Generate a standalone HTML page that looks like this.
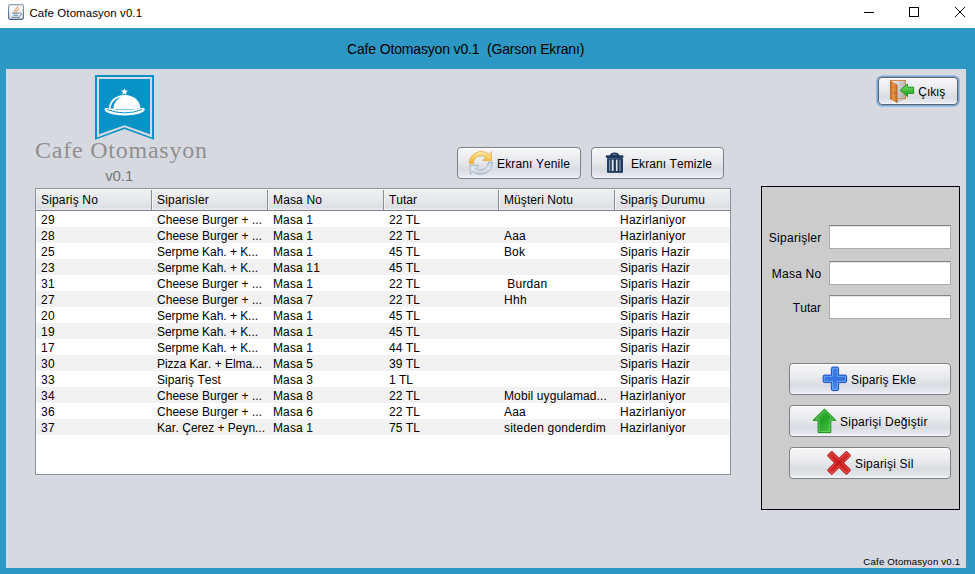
<!DOCTYPE html>
<html><head><meta charset="utf-8">
<style>
*{box-sizing:border-box;margin:0;padding:0}
html,body{width:975px;height:574px;overflow:hidden;background:#fff;font-family:"Liberation Sans",sans-serif;color:#000;font-kerning:none}
.abs{position:absolute}
.t{position:absolute;white-space:nowrap}
#titlebar{left:0;top:0;width:975px;height:28px;background:#fff}
#blue{left:0;top:28px;width:975px;height:546px;background:#2c98c3}
#panel{left:6px;top:69px;width:960px;height:499px;background:#d6d9e0}
.btn{position:absolute;border:1px solid #7d8187;border-radius:4px;background:linear-gradient(#f7f7f9 0%,#eaebee 40%,#d9dce1 72%,#e4e6ec 90%,#eff1f7 100%);box-shadow:inset 0 1px 0 #fff,inset 0 -1px 0 #f4f6fb}
#table{left:35px;top:188px;width:696px;height:287px;border:1px solid #8d9199;background:#fff;overflow:hidden}
.hdr{position:absolute;left:0;top:0;width:694px;height:22px;background:linear-gradient(#f0f1f3,#e4e6e9 60%,#dcdfe3 88%,#e8eaed 96%);border-bottom:1px solid #80848b;box-shadow:inset 0 1px 0 #fbfbfc}
.sep{position:absolute;top:1px;width:2px;height:20px;border-left:1px solid #8a8e95;border-right:1px solid #f3f4f6}
.rowg{position:absolute;left:0;width:694px;height:16px;background:#f2f2f2}
#rpanel{left:761px;top:186px;width:199px;height:324px;background:#cccccc;border:1px solid #000}
.tf{position:absolute;left:829px;width:122px;height:24px;background:#fff;border:1px solid #ababab;border-top-color:#848484;box-shadow:inset 0 1px 0 #e6e6e6}
</style></head><body>
<div id="titlebar" class="abs"></div>
<svg class="abs" style="left:8px;top:4px" width="16" height="16" viewBox="0 0 16 16">
<defs><linearGradient id="gj" x1="0" y1="0" x2="0" y2="1"><stop offset="0" stop-color="#ffffff"/><stop offset="1" stop-color="#e4e6e8"/></linearGradient>
<linearGradient id="gjb" x1="0" y1="0" x2="0" y2="1"><stop offset="0" stop-color="#8aa0b5"/><stop offset="1" stop-color="#3f5d7c"/></linearGradient></defs>
<rect x="0.6" y="0.6" width="14.8" height="14.8" rx="1.6" fill="url(#gj)" stroke="url(#gjb)" stroke-width="1.1"/>
<path d="M6.6,8.3C5.6,7 7.2,5.9 8.2,4.6C8.9,3.7 9.5,3.2 9.6,2.6M8.1,8.2C7.6,7.2 8.6,6.5 9.6,5.8C10.2,5.4 10.5,5.2 10.5,4.9" fill="none" stroke="#e8751c" stroke-width="0.95" stroke-linecap="round"/>
<path d="M4.2,9.2H11M5.4,11.3H9.8M3.2,13.3H12M11.4,8.5L13.8,10.2L11.4,12" fill="none" stroke="#5b7c9b" stroke-width="0.95"/>
</svg>
<div class="t" style="left:29.5px;top:7px;font-size:11.4px;line-height:12px;letter-spacing:0.129px;font-family:'Liberation Sans',sans-serif;">Cafe Otomasyon v0.1</div>
<svg class="abs" style="left:855px;top:0" width="120" height="28" viewBox="0 0 120 28">
<path d="M9,12.5H19" stroke="#000" stroke-width="1"/>
<rect x="54.5" y="7.5" width="9" height="9" fill="none" stroke="#000" stroke-width="1"/>
<path d="M100,7L110,17M110,7L100,17" stroke="#000" stroke-width="1"/>
</svg>
<div id="blue" class="abs"></div>
<div class="t" style="left:347px;top:41px;font-size:14px;line-height:16px;letter-spacing:-0.155px;font-family:'Liberation Sans',sans-serif;">Cafe Otomasyon v0.1&nbsp; (Garson Ekranı)</div>
<div id="panel" class="abs"></div>
<svg class="abs" style="left:95px;top:75px" width="59" height="65" viewBox="0 0 59 65">
<path d="M0,0H59V64.7L29.5,54L0,64.7Z" fill="#0892c6"/>
<path d="M2,2H57V62.4L29.5,52.2L2,62.4Z" fill="#d6d9e0"/>
<path d="M4,4H55V59.2L29.5,50.2L4,59.2Z" fill="#0892c6"/>
<path d="M29.4,13.3l1.05,2.2l2.45,0.25l-1.8,1.6l0.5,2.4l-2.2,-1.25l-2.2,1.25l0.5,-2.4l-1.8,-1.6l2.45,-0.25z" fill="#fff"/>
<path d="M13.9,33.8C13.9,25.6 20.8,20 29.6,20C38.4,20 45.4,25.6 45.4,33.8Q29.6,34.6 13.9,33.8Z" fill="#fff"/>
<path d="M26.8,21.9C21,22.6 16.3,27 15.4,33.4L18.6,33.6C18.4,29 20.6,24.6 26.8,21.9Z" fill="#0892c6"/>
<path d="M9.6,34.5C9.6,32.8 11.5,32.9 14,33.5Q29.6,36.2 45.3,33.5C47.8,32.9 49.7,32.8 49.7,34.5A20.05,6.1 0 0 1 9.6,34.5Z" fill="#fff"/>
<path d="M12.2,34.6Q29.6,41.1 47.1,34.6" fill="none" stroke="#0892c6" stroke-width="1"/>
</svg>
<div class="t" style="left:35px;top:137px;font-size:24px;line-height:26px;letter-spacing:0.774px;font-family:'Liberation Serif',serif;color:#918f8e;">Cafe Otomasyon</div>
<div class="t" style="left:105.2px;top:167px;font-size:15px;line-height:17px;letter-spacing:-0.088px;font-family:'Liberation Sans',sans-serif;color:#777777;">v0.1</div>
<div class="btn" style="left:878px;top:77px;width:80px;height:28px;border-color:#5f636a;box-shadow:0 0 0 1.6px #74a7da,inset 0 1px 0 #fff,inset 0 -1px 0 #f4f6fb"></div>
<svg class="abs" style="left:885px;top:76px" width="32" height="30" viewBox="0 0 32 30">
<defs><linearGradient id="gd" x1="0" y1="0" x2="1" y2="0.3"><stop offset="0" stop-color="#f6f6f6"/><stop offset="1" stop-color="#b4b4b4"/></linearGradient>
<linearGradient id="gw" x1="0" y1="0" x2="1" y2="0"><stop offset="0" stop-color="#c2641e"/><stop offset="0.5" stop-color="#e99445"/><stop offset="1" stop-color="#c46a22"/></linearGradient>
<linearGradient id="ga" x1="0" y1="0" x2="0" y2="1"><stop offset="0" stop-color="#8ee07a"/><stop offset="0.5" stop-color="#46bf3c"/><stop offset="1" stop-color="#229a22"/></linearGradient></defs>
<rect x="5.4" y="4.4" width="15.2" height="18.4" fill="url(#gd)" stroke="#d37a2c" stroke-width="0.9"/>
<path d="M12,23L20.6,23L12,27Z" fill="#c9c9c9"/>
<path d="M5,4.2L12.1,8.6V27L5,23Z" fill="url(#gw)"/>
<path d="M12.1,8.6V27" stroke="#a9561a" stroke-width="0.6"/>
<rect x="9" y="16.2" width="1" height="1.2" fill="#7a4a2a"/>
<rect x="4.9" y="8.2" width="0.8" height="1.2" fill="#8a9aa8"/>
<rect x="4.9" y="17.3" width="0.8" height="1.2" fill="#8a9aa8"/>
<path d="M15.3,14.2L22.5,8V11.2H28.6V17.4H22.5V20.6Z" fill="url(#ga)" stroke="#0f8f12" stroke-width="0.9" stroke-linejoin="miter"/>
</svg>
<div class="t" style="left:918.3px;top:85px;font-size:12px;line-height:14px;letter-spacing:-0.067px;font-family:'Liberation Sans',sans-serif;">Çıkış</div>
<div class="btn" style="left:457px;top:147px;width:124px;height:32px;"></div>
<svg class="abs" style="left:464px;top:148px" width="34" height="30" viewBox="0 0 34 30">
<defs><linearGradient id="go" x1="0" y1="0" x2="0" y2="1"><stop offset="0" stop-color="#fce7b0"/><stop offset="0.5" stop-color="#f8cc62"/><stop offset="1" stop-color="#eeaa2a"/></linearGradient>
<linearGradient id="gb" x1="0" y1="0" x2="0" y2="1"><stop offset="0" stop-color="#c5d1dd"/><stop offset="0.5" stop-color="#dfe6ee"/><stop offset="1" stop-color="#c3cfdb"/></linearGradient></defs>
<path d="M5.20,15.60A12.1,12.1 0 0 1 24.81,6.11L27.40,3.40L27.60,12.60L18.60,12.60L21.88,9.17A7.9,7.9 0 0 0 9.40,15.60Z" fill="url(#go)" stroke="#e0a63c" stroke-width="0.7" stroke-linejoin="round"/>
<path d="M28.40,14.20A12.1,12.1 0 0 1 8.79,23.69L6.20,26.40L6.00,17.20L15.00,17.20L11.72,20.63A7.9,7.9 0 0 0 24.20,14.20Z" fill="url(#gb)" stroke="#95a6b8" stroke-width="0.7" stroke-linejoin="round"/>
</svg>
<div class="t" style="left:497px;top:157px;font-size:12px;line-height:14px;letter-spacing:0.125px;font-family:'Liberation Sans',sans-serif;">Ekranı Yenile</div>
<div class="btn" style="left:591px;top:147px;width:133px;height:32px;"></div>
<svg class="abs" style="left:600px;top:148px" width="30" height="30" viewBox="0 0 30 30">
<path d="M9.9,8.2C9.9,5.6 12,4.6 14.6,4.6C17.2,4.6 19.3,5.6 19.3,8.2Z" fill="#1b375b"/>
<rect x="12.6" y="6.1" width="4.2" height="0.9" fill="#6f8097"/>
<rect x="5.8" y="7.2" width="17.7" height="2.8" rx="1.3" fill="#1b375b"/>
<rect x="7.0" y="10.3" width="16" height="14.4" rx="0.6" fill="#2a4466"/>
<rect x="7.7" y="10.6" width="14.6" height="13.8" fill="#1b375b"/>
<rect x="8.9" y="11.6" width="1.3" height="11.4" fill="#8796ab"/>
<rect x="11.8" y="11.6" width="1.8" height="11.4" fill="#e6eaf0"/>
<rect x="15.9" y="11.6" width="1.6" height="11.4" fill="#e6eaf0"/>
<rect x="19.3" y="11.6" width="1.3" height="11.4" fill="#8796ab"/>
</svg>
<div class="t" style="left:631px;top:157px;font-size:12px;line-height:14px;letter-spacing:0.070px;font-family:'Liberation Sans',sans-serif;">Ekranı Temizle</div>
<div id="table" class="abs">
<div class="hdr"></div>
<div class="sep" style="left:115px"></div>
<div class="sep" style="left:231px"></div>
<div class="sep" style="left:347px"></div>
<div class="sep" style="left:462px"></div>
<div class="sep" style="left:578px"></div>
<div class="t" style="left:5.0px;top:4px;font-size:12px;line-height:14px;letter-spacing:0.165px;font-family:'Liberation Sans',sans-serif;">Sipariş No</div>
<div class="t" style="left:121.0px;top:4px;font-size:12px;line-height:14px;letter-spacing:0.198px;font-family:'Liberation Sans',sans-serif;">Siparisler</div>
<div class="t" style="left:237.0px;top:4px;font-size:12px;line-height:14px;letter-spacing:0.140px;font-family:'Liberation Sans',sans-serif;">Masa No</div>
<div class="t" style="left:353.0px;top:4px;font-size:12px;line-height:14px;letter-spacing:-0.002px;font-family:'Liberation Sans',sans-serif;">Tutar</div>
<div class="t" style="left:468.0px;top:4px;font-size:12px;line-height:14px;letter-spacing:0.082px;font-family:'Liberation Sans',sans-serif;">Müşteri Notu</div>
<div class="t" style="left:584.0px;top:4px;font-size:12px;line-height:14px;letter-spacing:0.165px;font-family:'Liberation Sans',sans-serif;">Sipariş Durumu</div>
<div class="t" style="left:5.0px;top:24px;font-size:12px;line-height:14px;letter-spacing:0.326px;font-family:'Liberation Sans',sans-serif;">29</div>
<div class="t" style="left:121.0px;top:24px;font-size:12px;line-height:14px;letter-spacing:0.032px;font-family:'Liberation Sans',sans-serif;">Cheese Burger + ...</div>
<div class="t" style="left:237.0px;top:24px;font-size:12px;line-height:14px;letter-spacing:0.108px;font-family:'Liberation Sans',sans-serif;">Masa 1</div>
<div class="t" style="left:353.0px;top:24px;font-size:12px;line-height:14px;letter-spacing:0.063px;font-family:'Liberation Sans',sans-serif;">22 TL</div>
<div class="t" style="left:584.0px;top:24px;font-size:12px;line-height:14px;letter-spacing:0.221px;font-family:'Liberation Sans',sans-serif;">Hazirlaniyor</div>
<div class="rowg" style="top:38px"></div>
<div class="t" style="left:5.0px;top:40px;font-size:12px;line-height:14px;letter-spacing:0.326px;font-family:'Liberation Sans',sans-serif;">28</div>
<div class="t" style="left:121.0px;top:40px;font-size:12px;line-height:14px;letter-spacing:0.032px;font-family:'Liberation Sans',sans-serif;">Cheese Burger + ...</div>
<div class="t" style="left:237.0px;top:40px;font-size:12px;line-height:14px;letter-spacing:0.108px;font-family:'Liberation Sans',sans-serif;">Masa 1</div>
<div class="t" style="left:353.0px;top:40px;font-size:12px;line-height:14px;letter-spacing:0.063px;font-family:'Liberation Sans',sans-serif;">22 TL</div>
<div class="t" style="left:468.0px;top:40px;font-size:12px;line-height:14px;letter-spacing:0.216px;font-family:'Liberation Sans',sans-serif;">Aaa</div>
<div class="t" style="left:584.0px;top:40px;font-size:12px;line-height:14px;letter-spacing:0.221px;font-family:'Liberation Sans',sans-serif;">Hazirlaniyor</div>
<div class="t" style="left:5.0px;top:56px;font-size:12px;line-height:14px;letter-spacing:0.326px;font-family:'Liberation Sans',sans-serif;">25</div>
<div class="t" style="left:121.0px;top:56px;font-size:12px;line-height:14px;letter-spacing:-0.040px;font-family:'Liberation Sans',sans-serif;">Serpme Kah. + K...</div>
<div class="t" style="left:237.0px;top:56px;font-size:12px;line-height:14px;letter-spacing:0.108px;font-family:'Liberation Sans',sans-serif;">Masa 1</div>
<div class="t" style="left:353.0px;top:56px;font-size:12px;line-height:14px;letter-spacing:0.063px;font-family:'Liberation Sans',sans-serif;">45 TL</div>
<div class="t" style="left:468.0px;top:56px;font-size:12px;line-height:14px;letter-spacing:0.107px;font-family:'Liberation Sans',sans-serif;">Bok</div>
<div class="t" style="left:584.0px;top:56px;font-size:12px;line-height:14px;letter-spacing:0.153px;font-family:'Liberation Sans',sans-serif;">Siparis Hazir</div>
<div class="rowg" style="top:70px"></div>
<div class="t" style="left:5.0px;top:72px;font-size:12px;line-height:14px;letter-spacing:0.326px;font-family:'Liberation Sans',sans-serif;">23</div>
<div class="t" style="left:121.0px;top:72px;font-size:12px;line-height:14px;letter-spacing:-0.040px;font-family:'Liberation Sans',sans-serif;">Serpme Kah. + K...</div>
<div class="t" style="left:237.0px;top:72px;font-size:12px;line-height:14px;letter-spacing:0.139px;font-family:'Liberation Sans',sans-serif;">Masa 11</div>
<div class="t" style="left:353.0px;top:72px;font-size:12px;line-height:14px;letter-spacing:0.063px;font-family:'Liberation Sans',sans-serif;">45 TL</div>
<div class="t" style="left:584.0px;top:72px;font-size:12px;line-height:14px;letter-spacing:0.153px;font-family:'Liberation Sans',sans-serif;">Siparis Hazir</div>
<div class="t" style="left:5.0px;top:88px;font-size:12px;line-height:14px;letter-spacing:0.326px;font-family:'Liberation Sans',sans-serif;">31</div>
<div class="t" style="left:121.0px;top:88px;font-size:12px;line-height:14px;letter-spacing:0.032px;font-family:'Liberation Sans',sans-serif;">Cheese Burger + ...</div>
<div class="t" style="left:237.0px;top:88px;font-size:12px;line-height:14px;letter-spacing:0.108px;font-family:'Liberation Sans',sans-serif;">Masa 1</div>
<div class="t" style="left:353.0px;top:88px;font-size:12px;line-height:14px;letter-spacing:0.063px;font-family:'Liberation Sans',sans-serif;">22 TL</div>
<div class="t" style="left:471.3px;top:88px;font-size:12px;line-height:14px;letter-spacing:0.217px;font-family:'Liberation Sans',sans-serif;">Burdan</div>
<div class="t" style="left:584.0px;top:88px;font-size:12px;line-height:14px;letter-spacing:0.153px;font-family:'Liberation Sans',sans-serif;">Siparis Hazir</div>
<div class="rowg" style="top:102px"></div>
<div class="t" style="left:5.0px;top:104px;font-size:12px;line-height:14px;letter-spacing:0.326px;font-family:'Liberation Sans',sans-serif;">27</div>
<div class="t" style="left:121.0px;top:104px;font-size:12px;line-height:14px;letter-spacing:0.032px;font-family:'Liberation Sans',sans-serif;">Cheese Burger + ...</div>
<div class="t" style="left:237.0px;top:104px;font-size:12px;line-height:14px;letter-spacing:0.108px;font-family:'Liberation Sans',sans-serif;">Masa 7</div>
<div class="t" style="left:353.0px;top:104px;font-size:12px;line-height:14px;letter-spacing:0.063px;font-family:'Liberation Sans',sans-serif;">22 TL</div>
<div class="t" style="left:468.0px;top:104px;font-size:12px;line-height:14px;letter-spacing:0.329px;font-family:'Liberation Sans',sans-serif;">Hhh</div>
<div class="t" style="left:584.0px;top:104px;font-size:12px;line-height:14px;letter-spacing:0.153px;font-family:'Liberation Sans',sans-serif;">Siparis Hazir</div>
<div class="t" style="left:5.0px;top:120px;font-size:12px;line-height:14px;letter-spacing:0.326px;font-family:'Liberation Sans',sans-serif;">20</div>
<div class="t" style="left:121.0px;top:120px;font-size:12px;line-height:14px;letter-spacing:-0.040px;font-family:'Liberation Sans',sans-serif;">Serpme Kah. + K...</div>
<div class="t" style="left:237.0px;top:120px;font-size:12px;line-height:14px;letter-spacing:0.108px;font-family:'Liberation Sans',sans-serif;">Masa 1</div>
<div class="t" style="left:353.0px;top:120px;font-size:12px;line-height:14px;letter-spacing:0.063px;font-family:'Liberation Sans',sans-serif;">45 TL</div>
<div class="t" style="left:584.0px;top:120px;font-size:12px;line-height:14px;letter-spacing:0.153px;font-family:'Liberation Sans',sans-serif;">Siparis Hazir</div>
<div class="rowg" style="top:134px"></div>
<div class="t" style="left:5.0px;top:136px;font-size:12px;line-height:14px;letter-spacing:0.326px;font-family:'Liberation Sans',sans-serif;">19</div>
<div class="t" style="left:121.0px;top:136px;font-size:12px;line-height:14px;letter-spacing:-0.040px;font-family:'Liberation Sans',sans-serif;">Serpme Kah. + K...</div>
<div class="t" style="left:237.0px;top:136px;font-size:12px;line-height:14px;letter-spacing:0.108px;font-family:'Liberation Sans',sans-serif;">Masa 1</div>
<div class="t" style="left:353.0px;top:136px;font-size:12px;line-height:14px;letter-spacing:0.063px;font-family:'Liberation Sans',sans-serif;">45 TL</div>
<div class="t" style="left:584.0px;top:136px;font-size:12px;line-height:14px;letter-spacing:0.153px;font-family:'Liberation Sans',sans-serif;">Siparis Hazir</div>
<div class="t" style="left:5.0px;top:152px;font-size:12px;line-height:14px;letter-spacing:0.326px;font-family:'Liberation Sans',sans-serif;">17</div>
<div class="t" style="left:121.0px;top:152px;font-size:12px;line-height:14px;letter-spacing:-0.040px;font-family:'Liberation Sans',sans-serif;">Serpme Kah. + K...</div>
<div class="t" style="left:237.0px;top:152px;font-size:12px;line-height:14px;letter-spacing:0.108px;font-family:'Liberation Sans',sans-serif;">Masa 1</div>
<div class="t" style="left:353.0px;top:152px;font-size:12px;line-height:14px;letter-spacing:0.063px;font-family:'Liberation Sans',sans-serif;">44 TL</div>
<div class="t" style="left:584.0px;top:152px;font-size:12px;line-height:14px;letter-spacing:0.153px;font-family:'Liberation Sans',sans-serif;">Siparis Hazir</div>
<div class="rowg" style="top:166px"></div>
<div class="t" style="left:5.0px;top:168px;font-size:12px;line-height:14px;letter-spacing:0.326px;font-family:'Liberation Sans',sans-serif;">30</div>
<div class="t" style="left:121.0px;top:168px;font-size:12px;line-height:14px;letter-spacing:-0.035px;font-family:'Liberation Sans',sans-serif;">Pizza Kar. + Elma...</div>
<div class="t" style="left:237.0px;top:168px;font-size:12px;line-height:14px;letter-spacing:0.108px;font-family:'Liberation Sans',sans-serif;">Masa 5</div>
<div class="t" style="left:353.0px;top:168px;font-size:12px;line-height:14px;letter-spacing:0.063px;font-family:'Liberation Sans',sans-serif;">39 TL</div>
<div class="t" style="left:584.0px;top:168px;font-size:12px;line-height:14px;letter-spacing:0.153px;font-family:'Liberation Sans',sans-serif;">Siparis Hazir</div>
<div class="t" style="left:5.0px;top:184px;font-size:12px;line-height:14px;letter-spacing:0.326px;font-family:'Liberation Sans',sans-serif;">33</div>
<div class="t" style="left:121.0px;top:184px;font-size:12px;line-height:14px;letter-spacing:0.054px;font-family:'Liberation Sans',sans-serif;">Sipariş Test</div>
<div class="t" style="left:237.0px;top:184px;font-size:12px;line-height:14px;letter-spacing:0.108px;font-family:'Liberation Sans',sans-serif;">Masa 3</div>
<div class="t" style="left:353.0px;top:184px;font-size:12px;line-height:14px;letter-spacing:-0.003px;font-family:'Liberation Sans',sans-serif;">1 TL</div>
<div class="t" style="left:584.0px;top:184px;font-size:12px;line-height:14px;letter-spacing:0.153px;font-family:'Liberation Sans',sans-serif;">Siparis Hazir</div>
<div class="rowg" style="top:198px"></div>
<div class="t" style="left:5.0px;top:200px;font-size:12px;line-height:14px;letter-spacing:0.326px;font-family:'Liberation Sans',sans-serif;">34</div>
<div class="t" style="left:121.0px;top:200px;font-size:12px;line-height:14px;letter-spacing:0.032px;font-family:'Liberation Sans',sans-serif;">Cheese Burger + ...</div>
<div class="t" style="left:237.0px;top:200px;font-size:12px;line-height:14px;letter-spacing:0.108px;font-family:'Liberation Sans',sans-serif;">Masa 8</div>
<div class="t" style="left:353.0px;top:200px;font-size:12px;line-height:14px;letter-spacing:0.063px;font-family:'Liberation Sans',sans-serif;">22 TL</div>
<div class="t" style="left:468.0px;top:200px;font-size:12px;line-height:14px;letter-spacing:0.127px;font-family:'Liberation Sans',sans-serif;">Mobil uygulamad...</div>
<div class="t" style="left:584.0px;top:200px;font-size:12px;line-height:14px;letter-spacing:0.221px;font-family:'Liberation Sans',sans-serif;">Hazirlaniyor</div>
<div class="t" style="left:5.0px;top:216px;font-size:12px;line-height:14px;letter-spacing:0.326px;font-family:'Liberation Sans',sans-serif;">36</div>
<div class="t" style="left:121.0px;top:216px;font-size:12px;line-height:14px;letter-spacing:0.032px;font-family:'Liberation Sans',sans-serif;">Cheese Burger + ...</div>
<div class="t" style="left:237.0px;top:216px;font-size:12px;line-height:14px;letter-spacing:0.108px;font-family:'Liberation Sans',sans-serif;">Masa 6</div>
<div class="t" style="left:353.0px;top:216px;font-size:12px;line-height:14px;letter-spacing:0.063px;font-family:'Liberation Sans',sans-serif;">22 TL</div>
<div class="t" style="left:468.0px;top:216px;font-size:12px;line-height:14px;letter-spacing:0.216px;font-family:'Liberation Sans',sans-serif;">Aaa</div>
<div class="t" style="left:584.0px;top:216px;font-size:12px;line-height:14px;letter-spacing:0.221px;font-family:'Liberation Sans',sans-serif;">Hazirlaniyor</div>
<div class="rowg" style="top:230px"></div>
<div class="t" style="left:5.0px;top:232px;font-size:12px;line-height:14px;letter-spacing:0.326px;font-family:'Liberation Sans',sans-serif;">37</div>
<div class="t" style="left:121.0px;top:232px;font-size:12px;line-height:14px;letter-spacing:-0.019px;font-family:'Liberation Sans',sans-serif;">Kar. Çerez + Peyn...</div>
<div class="t" style="left:237.0px;top:232px;font-size:12px;line-height:14px;letter-spacing:0.108px;font-family:'Liberation Sans',sans-serif;">Masa 1</div>
<div class="t" style="left:353.0px;top:232px;font-size:12px;line-height:14px;letter-spacing:0.063px;font-family:'Liberation Sans',sans-serif;">75 TL</div>
<div class="t" style="left:468.0px;top:232px;font-size:12px;line-height:14px;letter-spacing:0.192px;font-family:'Liberation Sans',sans-serif;">siteden gonderdim</div>
<div class="t" style="left:584.0px;top:232px;font-size:12px;line-height:14px;letter-spacing:0.221px;font-family:'Liberation Sans',sans-serif;">Hazirlaniyor</div>
</div>
<div id="rpanel" class="abs"></div>
<div class="t" style="left:768.8px;top:231px;font-size:12px;line-height:14px;letter-spacing:0.278px;font-family:'Liberation Sans',sans-serif;">Siparişler</div>
<div class="tf" style="top:225px"></div>
<div class="t" style="left:771.8px;top:267px;font-size:12px;line-height:14px;letter-spacing:0.220px;font-family:'Liberation Sans',sans-serif;">Masa No</div>
<div class="tf" style="top:261px"></div>
<div class="t" style="left:792.8px;top:301px;font-size:12px;line-height:14px;letter-spacing:0.078px;font-family:'Liberation Sans',sans-serif;">Tutar</div>
<div class="tf" style="top:295px"></div>
<div class="btn" style="left:789px;top:363px;width:162px;height:32px;"></div>
<svg class="abs" style="left:818px;top:362px" width="34" height="34" viewBox="0 0 34 34">
<defs><linearGradient id="gp" x1="0" y1="0" x2="0" y2="1"><stop offset="0" stop-color="#3f7ee6"/><stop offset="0.5" stop-color="#3572df"/><stop offset="1" stop-color="#4a8cef"/></linearGradient></defs>
<path d="M13.4,6.5A1.4,1.4 0 0 1 14.8,5.1H19.200000000000003A1.4,1.4 0 0 1 20.6,6.5V13.1H27.200000000000003A1.4,1.4 0 0 1 28.6,14.5V19.200000000000003A1.4,1.4 0 0 1 27.200000000000003,20.6H20.6V27.200000000000003A1.4,1.4 0 0 1 19.200000000000003,28.6H14.8A1.4,1.4 0 0 1 13.4,27.200000000000003V20.6H6.5A1.4,1.4 0 0 1 5.1,19.200000000000003V14.5A1.4,1.4 0 0 1 6.5,13.1H13.4Z" fill="url(#gp)" stroke="#1c4fc2" stroke-width="1"/>
<path d="M14.6,6.8999999999999995A0.6,0.6 0 0 1 15.2,6.3H18.799999999999997A0.6,0.6 0 0 1 19.4,6.8999999999999995V14.3H26.799999999999997A0.6,0.6 0 0 1 27.4,14.9V18.799999999999997A0.6,0.6 0 0 1 26.799999999999997,19.4H19.4V26.799999999999997A0.6,0.6 0 0 1 18.799999999999997,27.4H15.2A0.6,0.6 0 0 1 14.6,26.799999999999997V19.4H6.8999999999999995A0.6,0.6 0 0 1 6.3,18.799999999999997V14.9A0.6,0.6 0 0 1 6.8999999999999995,14.3H14.6Z" fill="none" stroke="#8cc0ff" stroke-width="0.8" opacity="0.75"/>
</svg>
<div class="t" style="left:851px;top:373px;font-size:12px;line-height:14px;letter-spacing:0.137px;font-family:'Liberation Sans',sans-serif;">Sipariş Ekle</div>
<div class="btn" style="left:789px;top:405px;width:162px;height:32px;"></div>
<svg class="abs" style="left:808px;top:404px" width="34" height="34" viewBox="0 0 34 34">
<defs><linearGradient id="gg" x1="0" y1="0" x2="1" y2="1"><stop offset="0" stop-color="#5cc45a"/><stop offset="0.45" stop-color="#22a324"/><stop offset="1" stop-color="#58cc55"/></linearGradient></defs>
<path d="M16.5,5L27.8,16.3H22.8V28.6H10.1V16.3H5Z" fill="url(#gg)" stroke="#108f14" stroke-width="1" stroke-linejoin="round"/>
<path d="M16.5,6.6L25.3,15.4H21.9V27.6H11.1V15.4H7.6Z" fill="none" stroke="#9ee39a" stroke-width="0.7" opacity="0.6"/>
</svg>
<div class="t" style="left:840px;top:415px;font-size:12px;line-height:14px;letter-spacing:0.256px;font-family:'Liberation Sans',sans-serif;">Siparişi Değiştir</div>
<div class="btn" style="left:789px;top:447px;width:162px;height:32px;"></div>
<svg class="abs" style="left:822px;top:446px" width="34" height="34" viewBox="0 0 34 34">
<defs><linearGradient id="gx" x1="0" y1="0" x2="1" y2="1"><stop offset="0" stop-color="#e24a4a"/><stop offset="0.5" stop-color="#c81818"/><stop offset="1" stop-color="#ea4444"/></linearGradient></defs>
<g transform="translate(17.05,16.9) rotate(45)">
<path d="M-3.2,-12.1A1.5,1.5 0 0 1 -1.7000000000000002,-13.6H1.7000000000000002A1.5,1.5 0 0 1 3.2,-12.1V-3.2H12.1A1.5,1.5 0 0 1 13.6,-1.7000000000000002V1.7000000000000002A1.5,1.5 0 0 1 12.1,3.2H3.2V12.1A1.5,1.5 0 0 1 1.7000000000000002,13.6H-1.7000000000000002A1.5,1.5 0 0 1 -3.2,12.1V3.2H-12.1A1.5,1.5 0 0 1 -13.6,1.7000000000000002V-1.7000000000000002A1.5,1.5 0 0 1 -12.1,-3.2H-3.2Z" fill="url(#gx)" stroke="#b01212" stroke-width="0.9"/>
<path d="M-2.1,-12.0A0.5,0.5 0 0 1 -1.6,-12.5H1.6A0.5,0.5 0 0 1 2.1,-12.0V-2.1H12.0A0.5,0.5 0 0 1 12.5,-1.6V1.6A0.5,0.5 0 0 1 12.0,2.1H2.1V12.0A0.5,0.5 0 0 1 1.6,12.5H-1.6A0.5,0.5 0 0 1 -2.1,12.0V2.1H-12.0A0.5,0.5 0 0 1 -12.5,1.6V-1.6A0.5,0.5 0 0 1 -12.0,-2.1H-2.1Z" fill="none" stroke="#ff9a9a" stroke-width="0.7" opacity="0.55"/>
</g>
</svg>
<div class="t" style="left:855px;top:457px;font-size:12px;line-height:14px;letter-spacing:0.215px;font-family:'Liberation Sans',sans-serif;">Siparişi Sil</div>
<div class="t" style="left:863.3px;top:556px;font-size:9.7px;line-height:11px;letter-spacing:0.177px;font-family:'Liberation Sans',sans-serif;">Cafe Otomasyon v0.1</div>
</body></html>
